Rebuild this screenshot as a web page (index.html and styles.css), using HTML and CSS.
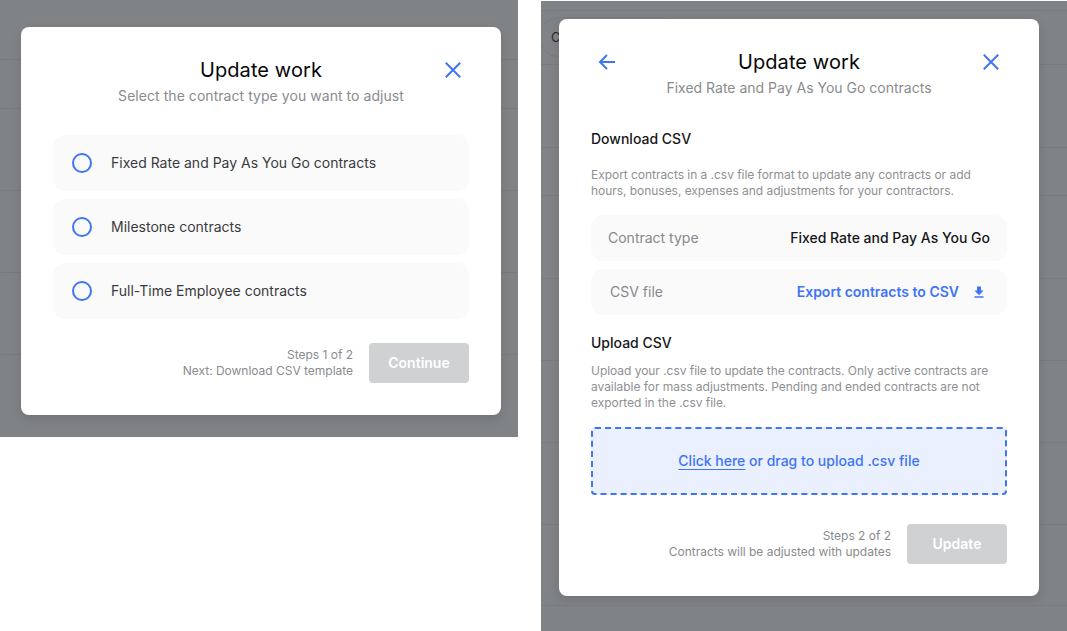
FILE: index.html
```html
<!DOCTYPE html>
<html lang="en">
  <head>
    <meta charset="UTF-8" />
    <title>Update work</title>
    <link rel="stylesheet" href="styles.css">
  </head>
  <body>
    <div class="screen screen-one">
      <div class="bg-lines">
        <div class="bg-line h59"></div>
        <div class="bg-line h49"></div>
        <div class="bg-line h82"></div>
        <div class="bg-line h82"></div>
        <div class="bg-line h82"></div>
      </div>

      <div class="modal modal-one">
        <div class="modal-head">
          <button type="button" class="icon-btn close-btn" aria-label="Close">
            <svg width="24" height="24" viewBox="0 0 24 24"><path d="M4.8 4.8l14.4 14.4M19.2 4.8L4.8 19.2" /></svg>
          </button>
          <h2>Update work</h2>
          <p class="subtitle">Select the contract type you want to adjust</p>
        </div>

        <div class="options">
          <label class="option"><span class="radio"></span><span class="option-text">Fixed Rate and Pay As You Go contracts</span></label>
          <label class="option"><span class="radio"></span><span class="option-text">Milestone contracts</span></label>
          <label class="option"><span class="radio"></span><span class="option-text">Full-Time Employee contracts</span></label>
        </div>

        <div class="modal-foot">
          <div class="steps">
            <div>Steps 1 of 2</div>
            <div>Next: Download CSV template</div>
          </div>
          <button type="button" class="primary-btn" disabled>Continue</button>
        </div>
      </div>
    </div>

    <div class="screen screen-two">
      <div class="bg-lines">
        <div class="bg-line h10"></div>
        <div class="bg-line h54"></div>
        <div class="bg-line h83"></div>
        <div class="bg-line h48"></div>
        <div class="bg-line h83"></div>
        <div class="bg-line h82"></div>
        <div class="bg-line h82"></div>
        <div class="bg-line h82"></div>
        <div class="bg-line h81"></div>
      </div>
      <div class="bg-pill">Contract</div>

      <div class="modal modal-two">
        <div class="modal-head">
          <button type="button" class="icon-btn back-btn" aria-label="Back">
            <svg width="24" height="24" viewBox="0 0 24 24"><path d="M20 12H5M12 5l-7 7 7 7" /></svg>
          </button>
          <button type="button" class="icon-btn close-btn" aria-label="Close">
            <svg width="24" height="24" viewBox="0 0 24 24"><path d="M4.8 4.8l14.4 14.4M19.2 4.8L4.8 19.2" /></svg>
          </button>
          <h2>Update work</h2>
          <p class="subtitle">Fixed Rate and Pay As You Go contracts</p>
        </div>

        <h3 class="section-title download-title">Download CSV</h3>
        <p class="section-text">Export contracts in a .csv file format to update any contracts or add hours, bonuses, expenses and adjustments for your contractors.</p>

        <div class="info-row">
          <span class="info-label">Contract type</span>
          <span class="info-value">Fixed Rate and Pay As You Go</span>
        </div>
        <div class="info-row export-row">
          <span class="info-label">CSV file</span>
          <a class="export-link" href="#">Export contracts to CSV
            <svg width="16" height="16" viewBox="0 0 16 16"><path d="M6 2.4h4v4.2h2.6L8 11.2 3.4 6.6H6zM3.4 12.2h9.2v1.5H3.4z" /></svg>
          </a>
        </div>

        <h3 class="section-title upload-title">Upload CSV</h3>
        <p class="section-text">Upload your .csv file to update the contracts. Only active contracts are available for mass adjustments. Pending and ended contracts are not exported in the .csv file.</p>

        <div class="dropzone"><a href="#">Click here</a>&nbsp;or drag to upload .csv file</div>

        <div class="modal-foot">
          <div class="steps">
            <div>Steps 2 of 2</div>
            <div>Contracts will be adjusted with updates</div>
          </div>
          <button type="button" class="primary-btn" disabled>Update</button>
        </div>
      </div>
    </div>
  </body>
</html>
```

FILE: styles.css
```css
html,
body {
  margin: 0;
  height: 631px;
  overflow: hidden;
  background: white;
}
body {
  font-family: Inter, "Noto Sans", sans-serif;
  display: flex;
  align-items: flex-start;
  gap: 23px;
}
.screen {
  position: relative;
  background: #808386;
  overflow: hidden;
}
.screen-one {
  width: 518px;
  height: 437px;
}
.screen-two {
  width: 526px;
  height: 630px;
  margin-top: 1px;
}
.bg-line {
  box-sizing: border-box;
  border-bottom: 1px solid #797c7f;
}
.h10 { height: 10px; }
.h48 { height: 48px; }
.h49 { height: 49px; }
.h54 { height: 54px; }
.h59 { height: 60px; }
.h81 { height: 81px; }
.h82 { height: 82px; }
.h83 { height: 83px; }
.bg-pill {
  position: absolute;
  left: -2px;
  top: 16px;
  width: 140px;
  height: 40px;
  box-sizing: border-box;
  border: 1px solid #797c7f;
  border-radius: 20px;
  padding: 11px;
  font-size: 13px;
  color: #2c2e30;
}
.modal {
  position: absolute;
  box-sizing: border-box;
  width: 480px;
  padding: 31px 32px 32px;
  background: white;
  border-radius: 8px;
  box-shadow: 0 4px 12px rgba(0, 0, 0, 0.12);
}
.modal-one {
  left: 21px;
  top: 27px;
  height: 388px;
}
.modal-two {
  left: 18px;
  top: 18px;
  height: 577px;
}
.modal-head {
  position: relative;
  text-align: center;
}
h2 {
  margin: 0;
  font-size: 20px;
  line-height: 24px;
  font-weight: 400;
  letter-spacing: 0.1px;
  color: #050608;
}
.subtitle {
  margin: 4px 0 0;
  font-size: 14px;
  line-height: 20px;
  letter-spacing: 0.05px;
  color: #8a8b8f;
}
.modal-two .subtitle {
  letter-spacing: 0;
}
.icon-btn {
  position: absolute;
  top: 0;
  padding: 0;
  border: 0;
  background: none;
  width: 24px;
  height: 24px;
}
.icon-btn svg {
  display: block;
  fill: none;
  stroke: #3f75f5;
  stroke-width: 2;
}
.close-btn {
  right: 4px;
}
.back-btn {
  left: 4px;
}
.options {
  display: flex;
  flex-direction: column;
  gap: 8px;
  margin-top: 29px;
}
.option {
  display: flex;
  align-items: center;
  height: 56px;
  padding-left: 19px;
  background: #fafafa;
  border-radius: 12px;
  font-size: 14px;
  color: #3a3b3f;
}
.option-text {
  margin-bottom: 2px;
}
.radio {
  box-sizing: border-box;
  width: 20px;
  height: 20px;
  margin-right: 19px;
  border: 2px solid #3f75f5;
  border-radius: 50%;
}
.modal-foot {
  display: flex;
  justify-content: flex-end;
  align-items: center;
  gap: 16px;
  margin-top: 24px;
}
.steps {
  text-align: right;
  font-size: 12px;
  line-height: 16px;
  letter-spacing: -0.02px;
  color: #8a8b8f;
}
.primary-btn {
  width: 100px;
  height: 40px;
  padding: 0 0 2px;
  border: 0;
  border-radius: 4px;
  background: #d0d1d3;
  color: white;
  font-family: inherit;
  font-size: 14px;
  font-weight: 600;
}
.section-title {
  margin: 0;
  font-size: 14px;
  line-height: 20px;
  font-weight: 500;
  color: #16171a;
}
.download-title {
  margin-top: 31px;
}
.upload-title {
  margin-top: 18px;
}
.section-text {
  margin: 10px 0 0;
  font-size: 12px;
  line-height: 16px;
  letter-spacing: -0.04px;
  color: #8f9094;
}
.download-title + .section-text {
  margin-top: 18px;
}
.info-row {
  display: flex;
  justify-content: space-between;
  align-items: center;
  box-sizing: border-box;
  height: 46px;
  margin-top: 8px;
  padding: 0 17px 2px;
  background: #fafafa;
  border-radius: 12px;
  font-size: 14px;
}
.download-title + .section-text + .info-row {
  margin-top: 16px;
}
.info-label {
  color: #87888c;
}
.info-value {
  font-weight: 500;
  color: #16171a;
}
.export-row {
  padding-left: 19px;
  padding-right: 20px;
}
.export-link {
  display: flex;
  align-items: center;
  gap: 12px;
  font-weight: 600;
  color: #3f75f5;
  text-decoration: none;
}
.export-link svg {
  margin-top: 2px;
  fill: #3f75f5;
}
.dropzone {
  display: flex;
  justify-content: center;
  align-items: center;
  box-sizing: border-box;
  height: 68px;
  margin-top: 16px;
  padding-bottom: 2px;
  background: #eaf0fe;
  border: 2px dashed #3f75f5;
  border-radius: 4px;
  font-size: 14px;
  font-weight: 500;
  color: #3f75f5;
}
.dropzone a {
  color: #3f75f5;
  text-decoration-thickness: 1px;
  text-underline-offset: 3px;
}
.modal-two .modal-foot {
  margin-top: 29px;
}
```
